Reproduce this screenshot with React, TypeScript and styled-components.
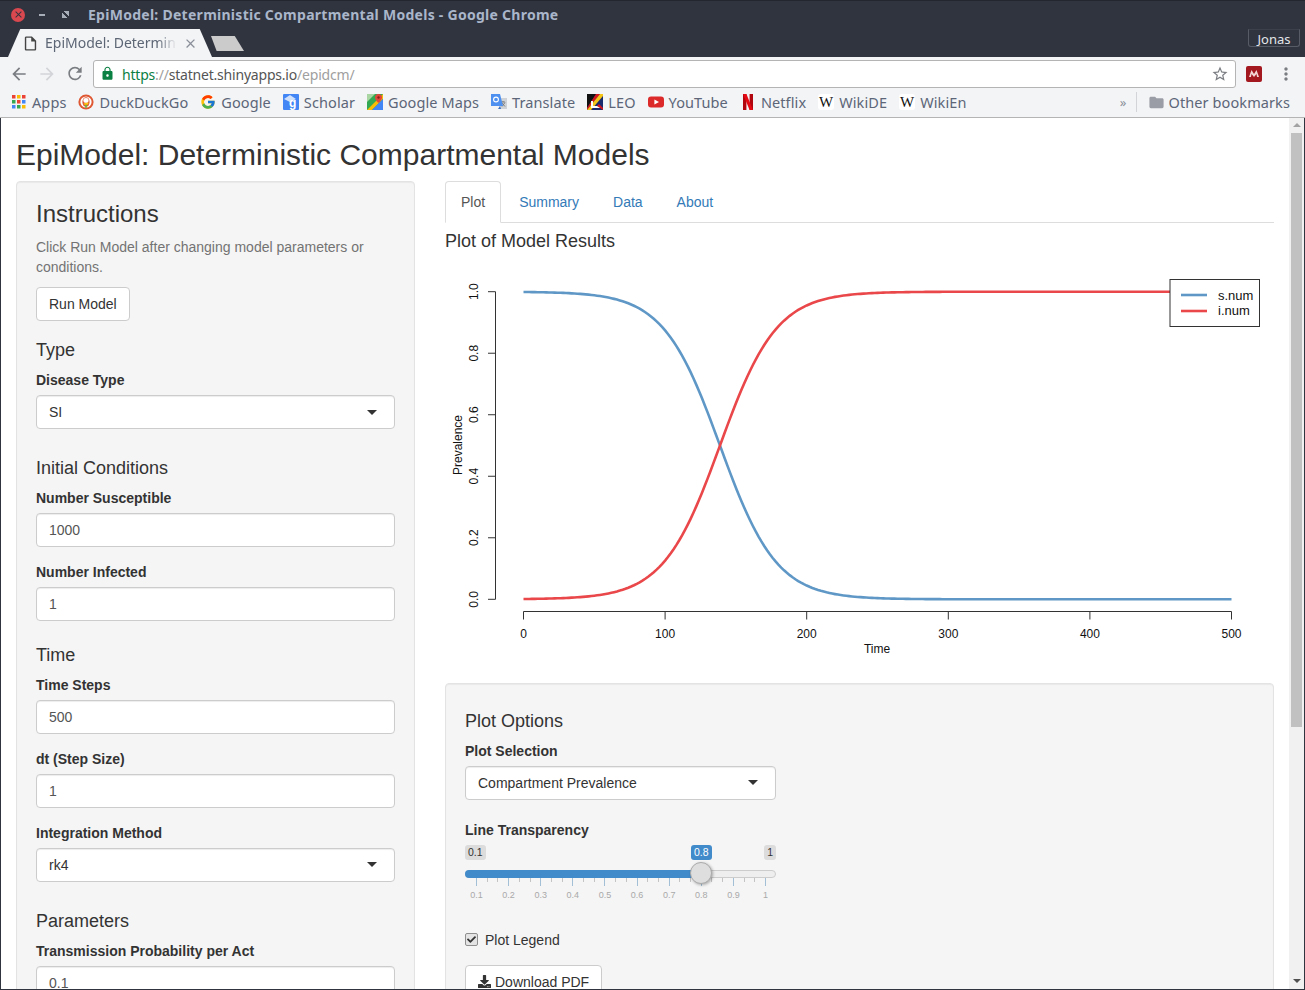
import React from "react";
import styled, { createGlobalStyle } from "styled-components";
import {
  MdArrowBack,
  MdArrowForward,
  MdRefresh,
  MdLock,
  MdStarBorder,
  MdMoreVert,
  MdFolder,
  MdClose,
  MdOutlineInsertDriveFile,
} from "react-icons/md";
import { FcGoogle } from "react-icons/fc";
import { FaCheck, FaDownload } from "react-icons/fa";

const GlobalStyle = createGlobalStyle`
  html, body {
    margin: 0;
    padding: 0;
    overflow: hidden;
    background: #fff;
  }
  * {
    box-sizing: border-box;
  }
`;

const Shell = styled.div`
  width: 1305px;
  height: 990px;
  display: flex;
  flex-direction: column;
  overflow: hidden;
  font-family: "Liberation Sans", Arial, sans-serif;
  font-size: 14px;
  line-height: 20px;
  color: #333;
`;

/* browser chrome */
const TitleBar = styled.div`
  height: 29px;
  flex: none;
  display: flex;
  align-items: center;
  padding: 0 0 1px 11px;
  background: #30343f;
  border-top: 1px solid #23262e;
`;

const WinClose = styled.span`
  width: 14px;
  height: 14px;
  border-radius: 50%;
  background: #d9484f;
  color: #30343f;
  display: flex;
  align-items: center;
  justify-content: center;
`;

const WinMin = styled.span`
  width: 6px;
  height: 2px;
  margin-left: 14px;
  background: #a8aeb8;
`;

const WinMax = styled.span`
  width: 7px;
  height: 7px;
  margin: 0 0 0 17px;
  background: linear-gradient(45deg, #a8aeb8 38%, transparent 38%, transparent 62%, #a8aeb8 62%);
`;

const WinTitle = styled.span`
  margin-left: 19px;
  font-family: "Noto Sans", sans-serif;
  font-weight: 700;
  font-size: 14px;
  letter-spacing: 0.27px;
  color: #aab6ca;
`;

const TabStrip = styled.div`
  height: 28px;
  flex: none;
  display: flex;
  align-items: flex-end;
  background: #30343f;
  padding: 0 5px 0 8px;
`;

const ActiveTab = styled.div`
  width: 204px;
  height: 28px;
  display: flex;
  align-items: center;
  padding: 0 0 0 14px;
  background: #f3f4f6;
  clip-path: polygon(0 100%, 6% 0, 94% 0, 100% 100%);
  font-family: "Noto Sans", sans-serif;
  font-size: 14px;
  color: #5d6675;
`;

const TabTitle = styled.span`
  margin-left: 6px;
  width: 132px;
  white-space: nowrap;
  -webkit-mask-image: linear-gradient(90deg, #000 85%, transparent);
  mask-image: linear-gradient(90deg, #000 85%, transparent);
`;

const TabClose = styled.span`
  display: flex;
  margin-left: 6px;
  color: #8a8f99;
`;

const NewTab = styled.div`
  width: 33px;
  height: 15px;
  margin: 0 0 6px -1px;
  background: #cbcbcb;
  clip-path: polygon(0 0, 72% 0, 100% 100%, 17% 100%);
`;

const ProfileButton = styled.div`
  margin: 0 0 10px auto;
  width: 52px;
  height: 18px;
  display: flex;
  align-items: center;
  justify-content: center;
  padding-top: 2px;
  border: 1px solid #565b66;
  border-top-color: #3c404a;
  border-radius: 0 0 3px 3px;
  font-family: "Noto Sans", sans-serif;
  font-size: 13px;
  color: #e4e6ea;
`;

const Toolbar = styled.div`
  height: 33px;
  flex: none;
  display: flex;
  align-items: center;
  background: #f3f4f6;
  padding: 0 0 0 9px;
`;

const NavIcon = styled.span<{ $faded?: boolean }>`
  display: flex;
  width: 20px;
  margin-right: 8px;
  color: ${(p) => (p.$faded ? "#d2d4d8" : "#7a7d82")};
`;

const Omnibox = styled.div`
  width: 1143px;
  height: 28px;
  display: flex;
  align-items: center;
  padding: 0 6px 0 6px;
  background: #fff;
  border: 1px solid #b4b4b4;
  border-radius: 3px;
  font-family: "Noto Sans", sans-serif;
  font-size: 14px;
  letter-spacing: -0.2px;
`;

const Lock = styled.span`
  display: flex;
  color: #0b8043;
  margin-right: 7px;
`;

const UrlPart = styled.span<{ $tone: string }>`
  padding-top: 2px;
  color: ${(p) => p.$tone};
`;

const Star = styled.span`
  margin-left: auto;
  display: flex;
  color: #7a7d82;
`;

const ExtensionBadge = styled.span`
  width: 16px;
  height: 16px;
  margin-left: 10px;
  border-radius: 2px;
  background: #a3171e;
  display: flex;
  align-items: center;
  justify-content: center;
`;

const Kebab = styled.span`
  display: flex;
  margin-left: 14px;
  color: #7a7d82;
`;

const BookmarkBar = styled.div`
  height: 28px;
  flex: none;
  display: flex;
  align-items: center;
  padding: 0 15px 3px 11px;
  background: #f3f4f6;
  border-bottom: 1px solid #b4b4b4;
  font-family: "Noto Sans", sans-serif;
  font-size: 14.5px;
  letter-spacing: 0.1px;
  color: #5c6678;
`;

const Bookmark = styled.span`
  display: flex;
  align-items: center;
  gap: 5px;
  margin-right: 12px;
  white-space: nowrap;
`;

const Favicon = styled.svg`
  width: 16px;
  height: 16px;
  flex: none;
  display: block;
`;

const FaviconLetter = styled.text`
  font-family: "Liberation Sans", Arial, sans-serif;
  font-weight: 700;
  font-size: 12px;
  fill: #fff;
`;

const WikiIcon = styled.span`
  width: 16px;
  height: 16px;
  flex: none;
  background: #fff;
  border-radius: 3px;
  color: #111;
  display: flex;
  align-items: center;
  justify-content: center;
  font-family: "Liberation Serif", serif;
  font-size: 15px;
  line-height: 16px;
`;

const Overflow = styled.span`
  margin-left: auto;
  color: #8a8f99;
  font-size: 13px;
  padding-right: 10px;
  border-right: 1px solid #d2d4d8;
  margin-right: 11px;
  line-height: 20px;
`;

const OtherBookmarks = styled.span`
  display: flex;
  align-items: center;
  gap: 3px;
  white-space: nowrap;
`;

const FolderIcon = styled.span`
  display: flex;
  color: #9a9da6;
`;

/* page */
const Viewport = styled.div`
  flex: 1;
  min-height: 0;
  display: flex;
  border-left: 1px solid #30343f;
  border-right: 1px solid #30343f;
  border-bottom: 1px solid #30343f;
  background: #fff;
`;

const Page = styled.div`
  flex: 1;
  min-width: 0;
  overflow: hidden;
  padding: 0 14px 0 15px;
`;

const Scrollbar = styled.div`
  width: 15px;
  flex: none;
  display: flex;
  flex-direction: column;
  align-items: center;
  background: #f1f1f1;
  padding-top: 5px;
`;

const ScrollArrow = styled.span<{ $down?: boolean }>`
  width: 0;
  height: 0;
  border-left: 4px solid transparent;
  border-right: 4px solid transparent;
  ${(p) =>
    p.$down
      ? "border-top: 4px solid #505050; margin-top: auto; margin-bottom: 6px;"
      : "border-bottom: 4px solid #a3a3a3;"}
`;

const ScrollThumb = styled.div`
  width: 11px;
  height: 594px;
  margin-top: 6px;
  background: #c1c1c1;
`;

const PageTitle = styled.h2`
  margin: 20px 0 10px;
  font-size: 30px;
  font-weight: 500;
  line-height: 1.1;
`;

const Columns = styled.div`
  display: grid;
  grid-template-columns: 399px 829px;
  column-gap: 30px;
  align-items: start;
`;

const Well = styled.div`
  padding: 19px;
  background: #f5f5f5;
  border: 1px solid #e3e3e3;
  border-radius: 4px;
  box-shadow: inset 0 1px 1px rgba(0, 0, 0, 0.05);
`;

const WellTitle = styled.h3`
  margin: 0 0 10px;
  font-size: 24px;
  font-weight: 500;
  line-height: 1.1;
`;

const HelpText = styled.p`
  margin: 0 0 10px;
  color: #737373;
`;

const Button = styled.div`
  display: inline-flex;
  align-items: center;
  gap: 4px;
  height: 34px;
  padding: 6px 12px;
  background: #fff;
  border: 1px solid #ccc;
  border-radius: 4px;
  color: #333;
  white-space: nowrap;
`;

const SectionTitle = styled.h4<{ $gap: number }>`
  margin: ${(p) => p.$gap}px 0 9px;
  font-size: 18px;
  font-weight: 500;
  line-height: 1.1;
`;

const Field = styled.div<{ $width?: number; $after?: number }>`
  width: ${(p) => (p.$width ? `${p.$width}px` : "100%")};
  margin-bottom: ${(p) => p.$after ?? 15}px;
`;

const FieldLabel = styled.label`
  display: block;
  margin-bottom: 5px;
  font-weight: 700;
`;

const TextInput = styled.div`
  height: 34px;
  padding: 6px 12px;
  background: #fff;
  border: 1px solid #ccc;
  border-radius: 4px;
  box-shadow: inset 0 1px 1px rgba(0, 0, 0, 0.075);
  color: #555;
`;

const SelectBox = styled.div`
  height: 34px;
  display: flex;
  align-items: center;
  justify-content: space-between;
  padding: 6px 17px 6px 12px;
  background: #fff;
  border: 1px solid #ccc;
  border-radius: 4px;
  box-shadow: inset 0 1px 1px rgba(0, 0, 0, 0.075);
  color: #333;
`;

const Caret = styled.span`
  width: 0;
  height: 0;
  border-left: 5px solid transparent;
  border-right: 5px solid transparent;
  border-top: 5px solid #333;
`;

const TabList = styled.div`
  display: flex;
  height: 42px;
  border-bottom: 1px solid #ddd;
`;

const TabLink = styled.div<{ $active?: boolean }>`
  height: 42px;
  margin-right: 2px;
  padding: 10px 15px;
  border: 1px solid ${(p) => (p.$active ? "#ddd" : "transparent")};
  border-bottom-color: ${(p) => (p.$active ? "#fff" : "transparent")};
  border-radius: 4px 4px 0 0;
  background: ${(p) => (p.$active ? "#fff" : "transparent")};
  color: ${(p) => (p.$active ? "#555" : "#337ab7")};
`;

const PlotHeading = styled.h4`
  margin: 9px 0 11px;
  font-size: 18px;
  font-weight: 500;
  line-height: 1.1;
`;

const Chart = styled.svg`
  display: block;
  width: 829px;
  height: 400px;
  margin-bottom: 20px;
`;

const ChartText = styled.text<{ $legend?: boolean }>`
  font-family: "Liberation Sans", Arial, sans-serif;
  font-size: ${(p) => (p.$legend ? 13 : 12)}px;
  fill: #111;
`;

const OptionsTitle = styled.h4`
  margin: 9px 0 9px;
  font-size: 18px;
  font-weight: 500;
  line-height: 1.1;
`;

/* range slider */
const Slider = styled.div`
  position: relative;
  width: 311px;
  height: 60px;
  margin-bottom: 25px;
`;

const SliderTag = styled.span<{ $left?: number; $right?: number; $active?: boolean }>`
  position: absolute;
  top: 0;
  ${(p) => (p.$left !== undefined ? `left: ${p.$left}px;` : "")}
  ${(p) => (p.$right !== undefined ? `right: ${p.$right}px;` : "")}
  height: 15px;
  padding: 0 3px;
  border-radius: 3px;
  font-size: 10.5px;
  line-height: 15px;
  background: ${(p) => (p.$active ? "#428bca" : "rgba(0, 0, 0, 0.1)")};
  color: ${(p) => (p.$active ? "#fff" : "#333")};
`;

const Track = styled.div`
  position: absolute;
  left: 0;
  right: 0;
  top: 25px;
  height: 8px;
  border-radius: 4px;
  background: #eee;
  border: 1px solid #ccc;
`;

const TrackFill = styled.div`
  position: absolute;
  left: 0;
  top: 25px;
  width: 236px;
  height: 8px;
  border-radius: 4px 0 0 4px;
  background: #428bca;
`;

const Handle = styled.div`
  position: absolute;
  left: 225px;
  top: 17px;
  width: 22px;
  height: 22px;
  border-radius: 50%;
  background: #dedede;
  border: 1px solid #ababab;
  box-shadow: 1px 1px 3px rgba(0, 0, 0, 0.3);
`;

const Grid = styled.div`
  position: absolute;
  left: 11px;
  top: 33px;
  width: 290px;
  display: flex;
  justify-content: space-between;
`;

const GridStep = styled.div`
  width: 1px;
  display: flex;
  flex-direction: column;
  align-items: center;
`;

const GridTick = styled.span<{ $major?: boolean }>`
  flex: none;
  width: 1px;
  height: ${(p) => (p.$major ? 8 : 4)}px;
  background: ${(p) => (p.$major ? "#a3bfd6" : "#c4c4c4")};
`;

const GridLabel = styled.span`
  font-size: 9px;
  line-height: 12px;
  margin-top: 3px;
  color: #a9a9a9;
`;

const CheckRow = styled.div`
  display: flex;
  align-items: center;
  gap: 7px;
  height: 20px;
  margin-bottom: 15px;
`;

const CheckBox = styled.span`
  width: 13px;
  height: 13px;
  display: flex;
  align-items: center;
  justify-content: center;
  background: #e4e4e4;
  border: 1px solid #8f8f8f;
  border-radius: 2px;
  color: #333;
`;

const bookmarks: { name: string; icon: React.ReactNode }[] = [
  {
    name: "Apps",
    icon: (
      <Favicon viewBox="0 0 16 16">
        {[
          "#ea4335", "#fbbc05", "#ea4335",
          "#34a853", "#ea4335", "#4285f4",
          "#4285f4", "#34a853", "#fbbc05",
        ].map((c, i) => (
          <rect key={i} x={1 + (i % 3) * 5} y={1 + Math.floor(i / 3) * 5} width="3.5" height="3.5" fill={c} />
        ))}
      </Favicon>
    ),
  },
  {
    name: "DuckDuckGo",
    icon: (
      <Favicon viewBox="0 0 16 16">
        <circle cx="8" cy="8" r="7.6" fill="#de5833" />
        <circle cx="8" cy="8" r="5.6" fill="#fff" />
        <ellipse cx="8" cy="8" rx="3.6" ry="4.8" fill="#de5833" />
        <ellipse cx="8" cy="6.4" rx="2.6" ry="2.4" fill="#fff" />
        <path d="M5.6 9.4 L10.6 8.4 L10 10.4 L6.4 10.8 Z" fill="#fdd20a" />
        <path d="M7 11 L9 11 L8.6 14 L7.4 14 Z" fill="#65bc46" />
      </Favicon>
    ),
  },
  { name: "Google", icon: <FcGoogle size={16} style={{ flex: "none" }} /> },
  {
    name: "Scholar",
    icon: (
      <Favicon viewBox="0 0 16 16">
        <rect width="16" height="16" rx="1" fill="#4285f4" />
        <path d="M1 5 L7 1 L13 5 L7 8 Z" fill="#cfe0fb" />
        <FaviconLetter x="6" y="13">g</FaviconLetter>
      </Favicon>
    ),
  },
  {
    name: "Google Maps",
    icon: (
      <Favicon viewBox="0 0 16 16">
        <rect width="16" height="16" fill="#34a853" />
        <path d="M0 16 L16 0 L16 5 L5 16 Z" fill="#fbbc05" />
        <path d="M5 16 L16 5 L16 16 Z" fill="#4285f4" />
        <path d="M0 0 L8 0 L0 8 Z" fill="#a8d5a2" />
        <path d="M11.5 0 C9 0 8 2 8 3.5 C8 6 11.5 9 11.5 9 C11.5 9 15 6 15 3.5 C15 2 14 0 11.5 0 Z" fill="#e0463a" />
        <circle cx="11.5" cy="3.5" r="1.2" fill="#8a2018" />
      </Favicon>
    ),
  },
  {
    name: "Translate",
    icon: (
      <Favicon viewBox="0 0 16 16">
        <path d="M7 4 L16 4 L16 15 L9 15 Z" fill="#cfd2d6" />
        <path d="M10 8 L14 8 M12 7 L12 8 M11 12.5 L14 8.5 M11 9 L14 12.5" stroke="#777" strokeWidth="0.9" fill="none" />
        <path d="M0 0 L9 0 L12 12 L0 12 Z" fill="#4d90f0" />
        <circle cx="5" cy="5.5" r="2.4" fill="none" stroke="#fff" strokeWidth="1.1" />
        <path d="M9 12 L7 15 L10 15 Z" fill="#3a6fc0" />
      </Favicon>
    ),
  },
  {
    name: "LEO",
    icon: (
      <Favicon viewBox="0 0 16 16">
        <rect width="16" height="16" fill="#1a2a6c" />
        <path d="M0 0 L9 0 L0 14 Z" fill="#111" />
        <path d="M9 0 L13 0 L0 16 L0 14 Z" fill="#d4151c" />
        <path d="M13 0 L16 0 L16 2 L4 16 L0 16 Z" fill="#f5c518" />
        <path d="M4 7 L6 7 L6 12 L13 12 L13 14 L4 14 Z" fill="#fff" />
        <path d="M12 10 L16 14 L16 16 L10 12 Z" fill="#d4151c" />
      </Favicon>
    ),
  },
  {
    name: "YouTube",
    icon: (
      <Favicon viewBox="0 0 16 16">
        <rect y="2.5" width="16" height="11" rx="3" fill="#dc2a2a" />
        <path d="M6.4 5.5 L11 8 L6.4 10.5 Z" fill="#fff" />
      </Favicon>
    ),
  },
  {
    name: "Netflix",
    icon: (
      <Favicon viewBox="0 0 16 16">
        <rect x="3" width="3.4" height="16" fill="#b1060f" />
        <rect x="9.6" width="3.4" height="16" fill="#b1060f" />
        <path d="M3 0 L6.4 0 L13 16 L9.6 16 Z" fill="#e50914" />
      </Favicon>
    ),
  },
  { name: "WikiDE", icon: <WikiIcon>W</WikiIcon> },
  { name: "WikiEn", icon: <WikiIcon>W</WikiIcon> },
];

// chart maps model values onto screen pixels, the svg viewBox uses page coordinates
const plotX = (t: number) => 523.5 + (t / 500) * 708;
const plotY = (v: number) => 599.3 - v * 307.6;
const infected = (t: number) => 1 / (1 + 1030 * Math.exp(-0.05 * t));

const curve = (fn: (t: number) => number) => {
  const pts: string[] = [];
  for (let t = 0; t <= 500; t += 2) {
    pts.push(`${plotX(t).toFixed(2)},${plotY(fn(t)).toFixed(2)}`);
  }
  return pts.join(" ");
};

const sliderSteps = Array.from({ length: 28 }, (_, i) => i);
const sliderLabels = ["0.1", "0.2", "0.3", "0.4", "0.5", "0.6", "0.7", "0.8", "0.9", "1"];

function PlotChart() {
  const yTicks = [0, 0.2, 0.4, 0.6, 0.8, 1];
  const xTicks = [0, 100, 200, 300, 400, 500];
  return (
    <Chart viewBox="445 263 829 400">
      <polyline points={curve((t) => 1 - infected(t))} fill="none" stroke="#5f98c6" strokeWidth="2.6" />
      <polyline points={curve(infected)} fill="none" stroke="#e94749" strokeWidth="2.6" />

      <path d="M495.5 291.7V599.3" stroke="#333" fill="none" />
      {yTicks.map((v) => (
        <g key={v}>
          <path d={`M488 ${plotY(v)}H495.5`} stroke="#333" />
          <ChartText
            x="478"
            y={plotY(v)}
            textAnchor="middle"
            transform={`rotate(-90 478 ${plotY(v)})`}
          >
            {v.toFixed(1)}
          </ChartText>
        </g>
      ))}
      <ChartText x="462" y="445" textAnchor="middle" transform="rotate(-90 462 445)">
        Prevalence
      </ChartText>

      <path d="M523.5 611.5H1231.5" stroke="#333" fill="none" />
      {xTicks.map((t) => (
        <g key={t}>
          <path d={`M${plotX(t)} 611.5V619.5`} stroke="#333" />
          <ChartText x={plotX(t)} y="638" textAnchor="middle">
            {t}
          </ChartText>
        </g>
      ))}
      <ChartText x="877" y="653" textAnchor="middle">
        Time
      </ChartText>

      <rect x="1170" y="279.5" width="89.5" height="47" fill="#fff" stroke="#333" />
      <path d="M1181 295H1207" stroke="#5f98c6" strokeWidth="2.6" />
      <path d="M1181 311H1207" stroke="#e94749" strokeWidth="2.6" />
      <ChartText $legend x="1218" y="300">s.num</ChartText>
      <ChartText $legend x="1218" y="315">i.num</ChartText>
    </Chart>
  );
}

function BrowserChrome() {
  return (
    <>
      <TitleBar>
        <WinClose>
          <MdClose size={11} />
        </WinClose>
        <WinMin />
        <WinMax />
        <WinTitle>EpiModel: Deterministic Compartmental Models - Google Chrome</WinTitle>
      </TitleBar>
      <TabStrip>
        <ActiveTab>
          <MdOutlineInsertDriveFile size={17} color="#444" />
          <TabTitle>EpiModel: Determin</TabTitle>
          <TabClose>
            <MdClose size={15} />
          </TabClose>
        </ActiveTab>
        <NewTab />
        <ProfileButton>Jonas</ProfileButton>
      </TabStrip>
      <Toolbar>
        <NavIcon>
          <MdArrowBack size={20} />
        </NavIcon>
        <NavIcon $faded>
          <MdArrowForward size={20} />
        </NavIcon>
        <NavIcon>
          <MdRefresh size={21} />
        </NavIcon>
        <Omnibox>
          <Lock>
            <MdLock size={15} />
          </Lock>
          <UrlPart $tone="#0b8043">https</UrlPart>
          <UrlPart $tone="#a0a0a0">://</UrlPart>
          <UrlPart $tone="#555">statnet.shinyapps.io</UrlPart>
          <UrlPart $tone="#a0a0a0">/epidcm/</UrlPart>
          <Star>
            <MdStarBorder size={18} />
          </Star>
        </Omnibox>
        <ExtensionBadge>
          <svg width="10" height="7" viewBox="0 0 10 7">
            <path d="M0 7 L2.5 0 L5 4 L7.5 0 L10 7 L8 7 L7.5 4 L5 7 L2.5 4 L2 7 Z" fill="#f3d6d6" />
          </svg>
        </ExtensionBadge>
        <Kebab>
          <MdMoreVert size={20} />
        </Kebab>
      </Toolbar>
      <BookmarkBar>
        {bookmarks.map((b) => (
          <Bookmark key={b.name}>
            {b.icon}
            {b.name}
          </Bookmark>
        ))}
        <Overflow>»</Overflow>
        <OtherBookmarks>
          <FolderIcon>
            <MdFolder size={17} />
          </FolderIcon>
          Other bookmarks
        </OtherBookmarks>
      </BookmarkBar>
    </>
  );
}

function Sidebar() {
  return (
    <Well>
      <WellTitle>Instructions</WellTitle>
      <HelpText>Click Run Model after changing model parameters or conditions.</HelpText>
      <Button>Run Model</Button>

      <SectionTitle $gap={20}>Type</SectionTitle>
      <Field $after={30}>
        <FieldLabel>Disease Type</FieldLabel>
        <SelectBox>
          SI
          <Caret />
        </SelectBox>
      </Field>

      <SectionTitle $gap={0}>Initial Conditions</SectionTitle>
      <Field>
        <FieldLabel>Number Susceptible</FieldLabel>
        <TextInput>1000</TextInput>
      </Field>
      <Field>
        <FieldLabel>Number Infected</FieldLabel>
        <TextInput>1</TextInput>
      </Field>

      <SectionTitle $gap={25}>Time</SectionTitle>
      <Field>
        <FieldLabel>Time Steps</FieldLabel>
        <TextInput>500</TextInput>
      </Field>
      <Field>
        <FieldLabel>dt (Step Size)</FieldLabel>
        <TextInput>1</TextInput>
      </Field>
      <Field $after={30}>
        <FieldLabel>Integration Method</FieldLabel>
        <SelectBox>
          rk4
          <Caret />
        </SelectBox>
      </Field>

      <SectionTitle $gap={0}>Parameters</SectionTitle>
      <Field>
        <FieldLabel>Transmission Probability per Act</FieldLabel>
        <TextInput>0.1</TextInput>
      </Field>
    </Well>
  );
}

function TransparencySlider() {
  return (
    <Slider>
      <SliderTag $left={0}>0.1</SliderTag>
      <SliderTag $left={226} $active>
        0.8
      </SliderTag>
      <SliderTag $right={0}>1</SliderTag>
      <Track />
      <TrackFill />
      <Grid>
        {sliderSteps.map((i) => (
          <GridStep key={i}>
            <GridTick $major={i % 3 === 0} />
            {i % 3 === 0 && <GridLabel>{sliderLabels[i / 3]}</GridLabel>}
          </GridStep>
        ))}
      </Grid>
      <Handle />
    </Slider>
  );
}

export default function App() {
  return (
    <Shell>
      <GlobalStyle />
      <BrowserChrome />
      <Viewport>
        <Page>
          <PageTitle>EpiModel: Deterministic Compartmental Models</PageTitle>
          <Columns>
            <Sidebar />
            <div>
              <TabList>
                <TabLink $active>Plot</TabLink>
                <TabLink>Summary</TabLink>
                <TabLink>Data</TabLink>
                <TabLink>About</TabLink>
              </TabList>
              <PlotHeading>Plot of Model Results</PlotHeading>
              <PlotChart />
              <Well>
                <OptionsTitle>Plot Options</OptionsTitle>
                <Field $width={311} $after={20}>
                  <FieldLabel>Plot Selection</FieldLabel>
                  <SelectBox>
                    Compartment Prevalence
                    <Caret />
                  </SelectBox>
                </Field>
                <FieldLabel>Line Transparency</FieldLabel>
                <TransparencySlider />
                <CheckRow>
                  <CheckBox>
                    <FaCheck size={9} />
                  </CheckBox>
                  Plot Legend
                </CheckRow>
                <Button>
                  <FaDownload size={13} />
                  Download PDF
                </Button>
              </Well>
            </div>
          </Columns>
        </Page>
        <Scrollbar>
          <ScrollArrow />
          <ScrollThumb />
          <ScrollArrow $down />
        </Scrollbar>
      </Viewport>
    </Shell>
  );
}
